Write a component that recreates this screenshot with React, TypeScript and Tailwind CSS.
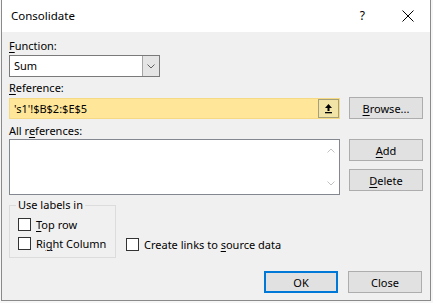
import React from 'react'

const U = ({ children }: { children: React.ReactNode }) => <span className="underline underline-offset-2">{children}</span>

const WinButton = ({ children, primary }: { children: React.ReactNode; primary?: boolean }) => (
    <button
        className={
            'w-[74px] h-[22px] bg-[#e1e1e1] text-black text-[11px] leading-none flex items-center justify-center ' +
            (primary ? 'border-2 border-[#0078d7]' : 'border border-[#adadad]')
        }
    >
        {children}
    </button>
)

const Check = ({ children }: { children: React.ReactNode }) => (
    <div className="flex items-center h-[13px]">
        <div className="w-[13px] h-[13px] border border-[#333333] bg-white shrink-0" />
        <span className="ml-[5px] leading-none">{children}</span>
    </div>
)

const App = () => {
    return (
        <div className="w-[433px] h-[303px] bg-[#f6f6f6] text-[11px] text-black" style={{ fontFamily: '"Segoe UI", "Noto Sans", sans-serif' }}>
            <div className="ml-[1px] w-[430px] h-[301px] border-x border-b border-[#8a8a8a] flex flex-col">
                {/* title bar */}
                <div className="h-[32px] bg-white flex items-center shrink-0">
                    <span className="ml-[9px] text-[11.5px]">Consolidate</span>
                    <span className="ml-auto mr-[37px] text-[12px]">?</span>
                    <svg width="12" height="12" viewBox="0 0 12 12" className="mr-[16px]">
                        <path d="M0.5 0.5 L11.5 11.5 M11.5 0.5 L0.5 11.5" stroke="#000" strokeWidth="1" />
                    </svg>
                </div>

                <div className="flex-1 bg-[#f0f0f0] pl-[7px] pr-[7px] flex flex-col">
                    <div className="mt-[6px] h-[16px] leading-[16px]"><U>F</U>unction:</div>
                    {/* function select */}
                    <div className="mt-[1px] w-[151px] h-[22px] border border-[#7a7a7a] bg-white flex">
                        <span className="flex-1 pl-[4px] leading-[20px]">Sum</span>
                        <div className="w-[17px] h-full bg-[#e5e5e5] border-l border-[#a5a5a5] flex items-center justify-center">
                            <svg width="8" height="5" viewBox="0 0 8 5">
                                <path d="M0.5 0.5 L4 4 L7.5 0.5" stroke="#606060" strokeWidth="1" fill="none" />
                            </svg>
                        </div>
                    </div>

                    <div className="mt-[3px] h-[16px] leading-[16px]"><U>R</U>eference:</div>
                    <div className="mt-[1px] flex items-center">
                        <div className="w-[332px] h-[21px] bg-[#ffe699] border border-[#f5d985] flex">
                            <span className="flex-1 pl-[4px] leading-[19px]">'s1'!$B$2:$E$5</span>
                            <div className="w-[21px] h-full bg-[#f2e4a6] border border-[#a3a07a] flex items-center justify-center">
                                <svg width="9" height="11" viewBox="0 0 9 11">
                                    <path d="M4.5 1 L1 5 H3.5 V8 H5.5 V5 H8 Z" fill="#000" />
                                    <rect x="1" y="9" width="7" height="1.3" fill="#000" />
                                </svg>
                            </div>
                        </div>
                        <div className="ml-[9px]"><WinButton><U>B</U>rowse...</WinButton></div>
                    </div>

                    <div className="mt-[4px] h-[16px] leading-[16px]">All r<U>e</U>ferences:</div>
                    <div className="flex">
                        <div className="w-[332px] h-[56px] bg-white border border-[#828790] flex justify-end">
                            <div className="w-[17px] flex flex-col items-center justify-between py-[8px]">
                                <svg width="8" height="5" viewBox="0 0 8 5">
                                    <path d="M0.5 4.5 L4 1 L7.5 4.5" stroke="#c2c2c2" strokeWidth="1" fill="none" />
                                </svg>
                                <svg width="8" height="5" viewBox="0 0 8 5">
                                    <path d="M0.5 0.5 L4 4 L7.5 0.5" stroke="#c2c2c2" strokeWidth="1" fill="none" />
                                </svg>
                            </div>
                        </div>
                        <div className="ml-[9px] flex flex-col gap-[8px]">
                            <WinButton><U>A</U>dd</WinButton>
                            <WinButton><U>D</U>elete</WinButton>
                        </div>
                    </div>

                    <div className="flex mt-[4px]">
                        <fieldset className="w-[107px] h-[59px] border border-[#dcdcdc] pl-[8px] pt-[7px] flex flex-col gap-[6px]">
                            <legend className="ml-[-2px] px-[2px] leading-[12px]">Use labels in</legend>
                            <Check><U>T</U>op row</Check>
                            <Check>Ri<U>g</U>ht Column</Check>
                        </fieldset>
                        <div className="ml-[10px] mt-[39px]">
                            <Check>Create links to <U>s</U>ource data</Check>
                        </div>
                    </div>

                    <div className="flex justify-end mt-[13px] pr-[1px]">
                        <WinButton primary>OK</WinButton>
                        <div className="ml-[10px]"><WinButton>Close</WinButton></div>
                    </div>
                </div>
            </div>
        </div>
    )
}

export default App
